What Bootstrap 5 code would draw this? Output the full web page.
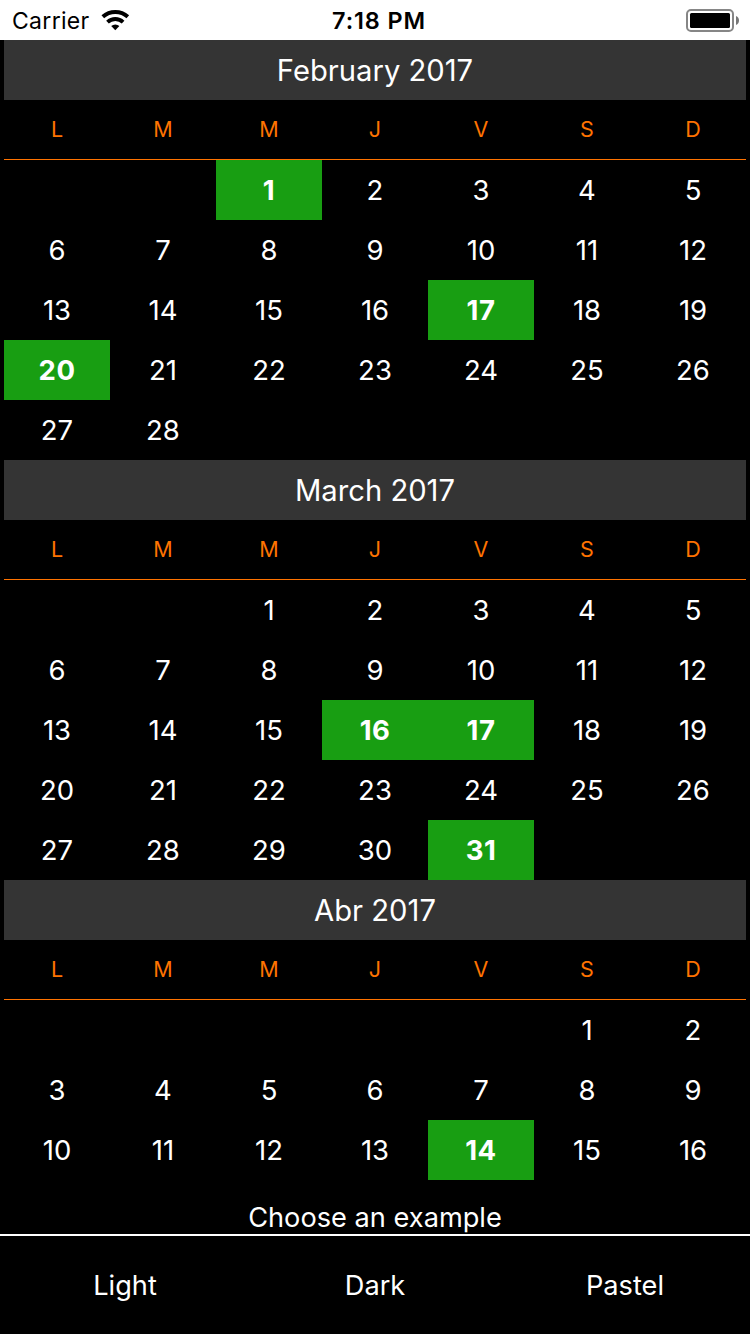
<!DOCTYPE html>
<html lang="en">
<head>
<meta charset="utf-8">
<meta name="viewport" content="width=device-width, initial-scale=1">
<title>Calendar</title>
<link href="https://cdn.jsdelivr.net/npm/bootstrap@5.3.0/dist/css/bootstrap.min.css" rel="stylesheet">
<style>
  body { font-family: Inter, "Liberation Sans", sans-serif; font-size: 27.2px; line-height: 1; }
  .status { height: 40px; padding: 0 10px 0 12px; font-size: 23px; }
  .status > * { flex: 1 1 0; }
  .carrier { letter-spacing: .3px; padding-top: 2px; }
  .clock { font-weight: 600; font-size: 23.4px; letter-spacing: .9px; padding: 2px 0 0 6px; }
  .months { height: 1160px; padding: 0 4px; }
  .month-title { height: 60px; background: #343434; font-size: 29.2px; padding-top: 1px; }
  .weekdays { height: 60px; border-bottom: 1px solid #ff7300; color: #ff7300; font-size: 21.5px; }
  .week, .weekdays { display: grid; grid-template-columns: repeat(7, 106px); }
  .week { height: 60px; }
  .day { display: flex; align-items: center; justify-content: center; padding-top: 2px; }
  .weekdays .day { padding-top: 0; }
  .week .day { font-size: 27.5px; }
  .week .picked { background: #189e12; font-weight: 700; letter-spacing: .5px; }
  .chooser { height: 36px; border-bottom: 2px solid #fff; padding-top: 2px; }
  .choices { height: 98px; padding-top: 2px; }
</style>
</head>
<body class="bg-black text-white vh-100 overflow-hidden d-flex flex-column">
<header class="status bg-white text-black d-flex align-items-center flex-shrink-0">
  <div class="d-flex align-items-center">
    <span class="carrier">Carrier</span>
    <svg class="ms-2" width="36" height="24" viewBox="0 0 36 24" fill="none" stroke="#000" aria-hidden="true">
      <path d="M4.800 8.800a18.500 18.500 0 0 1 25 0" stroke-width="3.900"/>
      <path d="M9.500 14.100a11.500 11.500 0 0 1 15.600 0" stroke-width="3.900"/>
      <path d="M13.200 18.100a6.200 6.200 0 0 1 8.200 0L17.300 22.300z" fill="#000" stroke="none"/>
    </svg>
  </div>
  <div class="clock text-center">7:18 PM</div>
  <div class="d-flex justify-content-end">
    <svg width="54" height="24" viewBox="0 0 54 24" aria-hidden="true">
      <rect x="1" y="2" width="46" height="21" rx="4" fill="none" stroke="#868686" stroke-width="2"/>
      <rect x="4" y="5" width="40" height="15" rx="1.5"/>
      <path d="M50 8c4 1.5 4 7.500 0 9z" fill="#777"/>
    </svg>
  </div>
</header>
<main id="months" class="months overflow-hidden flex-shrink-0"></main>
<div class="chooser d-flex align-items-center justify-content-center flex-shrink-0"><span class="choose">Choose an example</span></div>
<nav class="choices row g-0 align-items-center text-center flex-shrink-0">
  <div class="col-4">Light</div>
  <div class="col-4">Dark</div>
  <div class="col-4">Pastel</div>
</nav>
<script src="https://cdn.jsdelivr.net/npm/bootstrap@5.3.0/dist/js/bootstrap.bundle.min.js"></script>
<script>
  // offset: empty cells before day 1, with Monday as the first column
  const months = [
    { title: 'February 2017', offset: 2, days: 28, picked: [1, 17, 20] },
    { title: 'March 2017', offset: 2, days: 31, picked: [16, 17, 31] },
    { title: 'Abr 2017', offset: 5, days: 30, picked: [14] }
  ];
  const cell = (text, extra = '') => `<div class="day${extra}">${text}</div>`;
  document.getElementById('months').innerHTML = months.map(m => {
    let weeks = '';
    for (let start = 1 - m.offset; start <= m.days; start += 7) {
      let row = '';
      for (let d = start; d < start + 7; d++) {
        row += cell(d > 0 && d <= m.days ? d : '', m.picked.includes(d) ? ' picked' : '');
      }
      weeks += `<div class="week">${row}</div>`;
    }
    return `<section>
      <div class="month-title d-flex align-items-center justify-content-center">${m.title}</div>
      <div class="weekdays">${[...'LMMJVSD'].map(d => cell(d)).join('')}</div>
      ${weeks}</section>`;
  }).join('');
</script>
</body>
</html>
